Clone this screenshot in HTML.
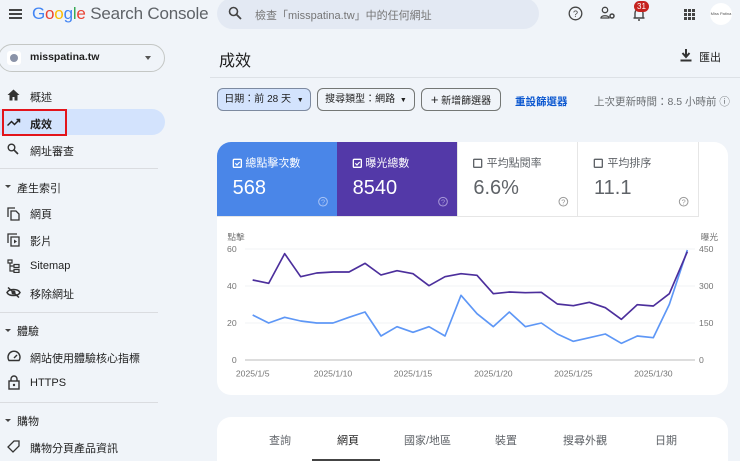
<!DOCTYPE html>
<html style="width:740px;height:461px;overflow:hidden"><head><meta charset="utf-8"><style>
*{margin:0;padding:0;box-sizing:border-box}
body{width:740px;height:461px;overflow:hidden;background:#f0f4f9;font-family:"Liberation Sans","Noto Sans CJK TC",sans-serif;color:#1f1f1f;position:relative}
.a{position:absolute;white-space:nowrap}
.nav{font-size:11px;color:#1f1f1f}
.sec{font-size:11px;color:#1f1f1f}
.hr{position:absolute;left:0;width:158px;height:1px;background:#dadce0}
.chip{position:absolute;top:88px;height:23px;border:1px solid #747775;border-radius:6px;font-size:10px;line-height:21px;padding:0 6px;color:#1f1f1f;white-space:nowrap;overflow:hidden;text-align:center}
</style></head><body>
<!-- top bar -->
<div class="a" style="left:9px;top:9px;width:13px;height:2px;background:#444;box-shadow:0 4px 0 #444,0 8px 0 #444"></div>
<div class="a" style="left:32px;top:4px;font-size:17px;letter-spacing:-0.2px"><span style="color:#4285f4">G</span><span style="color:#ea4335">o</span><span style="color:#fbbc05">o</span><span style="color:#4285f4">g</span><span style="color:#34a853">l</span><span style="color:#ea4335">e</span> <span style="color:#5f6368">Search Console</span></div>
<div class="a" style="left:217px;top:-2px;width:322px;height:31px;background:#e3e9f3;border-radius:16px"></div>
<svg class="a" style="left:228px;top:6px" width="14" height="14" viewBox="0 0 14 14"><circle cx="5.5" cy="5.5" r="4" fill="none" stroke="#444" stroke-width="1.6"/><path d="M8.5 8.5L13 13" stroke="#444" stroke-width="1.8"/></svg>
<div class="a" style="left:255px;top:7px;font-size:11px;color:#757575">檢查「misspatina.tw」中的任何網址</div>
<svg class="a" style="left:568px;top:6px" width="15" height="15" viewBox="0 0 15 15"><circle cx="7.5" cy="7.5" r="6.3" fill="none" stroke="#444" stroke-width="1.3"/><text x="7.5" y="11" font-size="9" text-anchor="middle" fill="#444" font-family="Liberation Sans">?</text></svg>
<svg class="a" style="left:600px;top:6px" width="16" height="14" viewBox="0 0 16 14"><circle cx="5" cy="4" r="2.7" fill="none" stroke="#444" stroke-width="1.3"/><path d="M1 12c0-3 8-3 8 0z" fill="none" stroke="#444" stroke-width="1.3"/><circle cx="12" cy="10" r="2" fill="none" stroke="#444" stroke-width="1.5"/></svg>
<svg class="a" style="left:632px;top:6px" width="14" height="16" viewBox="0 0 14 16"><path d="M3 12V7a4 4 0 018 0v5h1.5M1.5 12h11M6 14h2" fill="none" stroke="#444" stroke-width="1.4"/></svg>
<div class="a" style="left:634px;top:1px;width:15px;height:11px;border-radius:6px;background:#c5221f;color:#fff;font-size:8px;line-height:11px;text-align:center">31</div>
<div class="a" style="left:684px;top:9px;width:3px;height:3px;background:#444;box-shadow:4px 0 #444,8px 0 #444,0 4px #444,4px 4px #444,8px 4px #444,0 8px #444,4px 8px #444,8px 8px #444"></div>
<div class="a" style="left:710px;top:3px;width:22px;height:22px;border-radius:50%;background:#fff;font-size:4px;color:#555;text-align:center;line-height:22px">Miss Patina</div>
<!-- sidebar -->
<div class="a" style="left:-2px;top:44px;width:167px;height:28px;border:1px solid #c4c7c5;border-radius:14px;background:#f0f4f9"></div>
<div class="a" style="left:7px;top:51px;width:14px;height:14px;background:#fff;border-radius:3px"></div>
<div class="a" style="left:10px;top:54px;width:8px;height:8px;border-radius:50%;background:#8a93a8"></div>
<div class="a nav" style="left:30px;top:51px;font-weight:bold;font-size:10.5px">misspatina.tw</div>
<div class="a" style="left:145px;top:56px;border:3px solid transparent;border-top:4px solid #555"></div>
<svg class="a" style="left:7px;top:89px" width="13" height="12" viewBox="0 0 13 12"><path d="M6.5 0.5L0.5 6h2v5.5h3V8h2v3.5h3V6h2z" fill="#333"/></svg>
<div class="a nav" style="left:30px;top:89px">概述</div>
<div class="a" style="left:-20px;top:109px;width:185px;height:26px;background:#d3e3fd;border-radius:0 13px 13px 0"></div>
<svg class="a" style="left:7px;top:117px" width="14" height="10" viewBox="0 0 14 10"><path d="M0.5 8.5l4-4 3 3 5-5M9.5 2.5h3v3" fill="none" stroke="#222" stroke-width="1.5"/></svg>
<div class="a nav" style="left:30px;top:116px;font-weight:bold">成效</div>
<div class="a" style="left:2px;top:109px;width:65px;height:27px;border:2px solid #e3141b"></div>
<svg class="a" style="left:7px;top:143px" width="12" height="12" viewBox="0 0 12 12"><circle cx="4.5" cy="4.5" r="3.3" fill="none" stroke="#333" stroke-width="1.4"/><path d="M7 7l4 4" stroke="#333" stroke-width="1.6"/></svg>
<div class="a nav" style="left:30px;top:143px">網址審查</div>
<div class="hr" style="top:168px"></div>
<div class="a" style="left:5px;top:185px;border:3px solid transparent;border-top:3px solid #444"></div>
<div class="a sec" style="left:17px;top:180px">產生索引</div>
<svg class="a" style="left:7px;top:207px" width="13" height="14" viewBox="0 0 13 14"><path d="M1 10V1h7M4 4h5l3 3v6H4z" fill="none" stroke="#333" stroke-width="1.3"/></svg>
<div class="a nav" style="left:30px;top:206px">網頁</div>
<svg class="a" style="left:7px;top:233px" width="13" height="14" viewBox="0 0 13 14"><path d="M1 10V1h9M4 4h8v9H4z" fill="none" stroke="#333" stroke-width="1.3"/><path d="M7 6.5v4l3-2z" fill="#333"/></svg>
<div class="a nav" style="left:30px;top:233px">影片</div>
<svg class="a" style="left:7px;top:259px" width="13" height="14" viewBox="0 0 13 14"><path d="M1 1h4v3H1zM3 4v8h4M3 7h4M7 5.5h5v3H7zM7 10.5h5v3H7z" fill="none" stroke="#333" stroke-width="1.2"/></svg>
<div class="a nav" style="left:30px;top:260px">Sitemap</div>
<svg class="a" style="left:6px;top:287px" width="15" height="11" viewBox="0 0 15 11"><path d="M1 5.5C3 1.5 12 1.5 14 5.5 12 9.5 3 9.5 1 5.5z" fill="none" stroke="#333" stroke-width="1.5"/><circle cx="7.5" cy="5.5" r="2" fill="#333"/><path d="M2 0.5l11 10" stroke="#333" stroke-width="1.5"/></svg>
<div class="a nav" style="left:30px;top:286px">移除網址</div>
<div class="hr" style="top:312px"></div>
<div class="a" style="left:5px;top:329px;border:3px solid transparent;border-top:3px solid #444"></div>
<div class="a sec" style="left:17px;top:323px">體驗</div>
<svg class="a" style="left:7px;top:350px" width="14" height="12" viewBox="0 0 14 12"><path d="M2 10.5A6 6 0 1112 10.5z" fill="none" stroke="#333" stroke-width="1.4"/><path d="M7 8l3-3" stroke="#333" stroke-width="1.4"/></svg>
<div class="a nav" style="left:30px;top:350px">網站使用體驗核心指標</div>
<svg class="a" style="left:8px;top:375px" width="12" height="15" viewBox="0 0 12 15"><path d="M3 6V4a3 3 0 016 0v2" fill="none" stroke="#333" stroke-width="1.4"/><rect x="1" y="6" width="10" height="8" fill="none" stroke="#333" stroke-width="1.4"/><circle cx="6" cy="10" r="1.2" fill="#333"/></svg>
<div class="a nav" style="left:30px;top:377px">HTTPS</div>
<div class="hr" style="top:402px"></div>
<div class="a" style="left:5px;top:419px;border:3px solid transparent;border-top:3px solid #444"></div>
<div class="a sec" style="left:17px;top:413px">購物</div>
<svg class="a" style="left:7px;top:440px" width="13" height="13" viewBox="0 0 13 13"><path d="M7 1h5v5l-6 6-5-5z" fill="none" stroke="#333" stroke-width="1.3"/></svg>
<div class="a nav" style="left:30px;top:440px">購物分頁產品資訊</div>
<!-- main header -->
<div class="a" style="left:219px;top:47px;font-size:16px">成效</div>
<svg class="a" style="left:680px;top:49px" width="12" height="13" viewBox="0 0 12 13"><path d="M6 0v7M2.5 4l3.5 4 3.5-4" fill="none" stroke="#333" stroke-width="2"/><rect x="0.5" y="10.5" width="11" height="2" fill="#333"/></svg>
<div class="a" style="left:699px;top:49px;font-size:11px">匯出</div>
<div class="a" style="left:210px;top:77px;width:530px;height:1px;background:#dde1e6"></div>
<div class="chip" style="left:217px;width:94px;background:#d3e3fd;border-color:#7d8aa0">日期：前 28 天 <span style="font-size:7px;margin-left:3px">▼</span></div>
<div class="chip" style="left:317px;width:98px">搜尋類型：網路 <span style="font-size:7px;margin-left:2px">▼</span></div>
<div class="chip" style="left:421px;width:80px"><span style="font-size:13px">+</span> 新增篩選器</div>
<div class="a" style="left:515px;top:94px;font-size:10.5px;color:#0b57d0;font-weight:bold">重設篩選器</div>
<div class="a" style="left:594px;top:94px;font-size:10.5px;color:#6b6f73">上次更新時間：8.5 小時前 ⓘ</div>
<!-- chart card -->
<div class="a" style="left:217px;top:142px;width:511px;height:253px;background:#fff;border-radius:14px;overflow:hidden">
 <div class="a" style="left:0;top:0;width:120px;height:74px;background:#4a86e8"></div>
 <div class="a" style="left:120px;top:0;width:120px;height:74px;background:#5339a8"></div>
 <div class="a" style="left:240px;top:0;width:1px;height:74px;background:#e6e6e6"></div>
 <div class="a" style="left:360px;top:0;width:1px;height:74px;background:#e6e6e6"></div>
 <div class="a" style="left:481px;top:0;width:1px;height:74px;background:#e6e6e6"></div>
 <div class="a" style="left:0;top:74px;width:482px;height:1px;background:#e6e6e6"></div>
</div>
<svg class="a" style="left:210px;top:140px" width="520" height="250" viewBox="0 0 1560 750" font-family="Liberation Sans,Noto Sans CJK TC,sans-serif">
 <g font-size="33">
  <rect x="70" y="58" width="24" height="24" rx="3" fill="none" stroke="#fff" stroke-width="4"/><path d="M76 70l5 5 8-9" fill="none" stroke="#fff" stroke-width="3.5"/>
  <text x="106" y="80" fill="#fff">總點擊次數</text>
  <text x="68" y="162" fill="#fff" font-size="60">568</text>
  <rect x="430" y="58" width="24" height="24" rx="3" fill="none" stroke="#fff" stroke-width="4"/><path d="M436 70l5 5 8-9" fill="none" stroke="#fff" stroke-width="3.5"/>
  <text x="466" y="80" fill="#fff">曝光總數</text>
  <text x="428" y="162" fill="#fff" font-size="60">8540</text>
  <rect x="791" y="58" width="24" height="24" rx="2" fill="none" stroke="#5f6368" stroke-width="4"/>
  <text x="830" y="80" fill="#5f6368">平均點閱率</text>
  <text x="790" y="162" fill="#5f6368" font-size="60">6.6%</text>
  <rect x="1153" y="58" width="24" height="24" rx="2" fill="none" stroke="#5f6368" stroke-width="4"/>
  <text x="1192" y="80" fill="#5f6368">平均排序</text>
  <text x="1152" y="162" fill="#5f6368" font-size="60">11.1</text>
 </g>
 <g fill="none" stroke-width="3"><circle cx="339" cy="185" r="13" stroke="#a9c4f5"/><circle cx="699" cy="185" r="13" stroke="#a899d8"/><circle cx="1060" cy="185" r="13" stroke="#999"/><circle cx="1421" cy="185" r="13" stroke="#999"/></g>
 <g font-size="22" text-anchor="middle"><text x="339" y="193" fill="#a9c4f5">?</text><text x="699" y="193" fill="#a899d8">?</text><text x="1060" y="193" fill="#999">?</text><text x="1421" y="193" fill="#999">?</text></g>
 <g stroke="#eceff1" stroke-width="2"><path d="M105 327H1455M105 438H1455M105 549H1455"/></g>
 <path d="M105 660H1455" stroke="#bbb" stroke-width="3"/>
 <g font-size="26" fill="#757575">
  <text x="52" y="300">點擊</text><text x="1472" y="300">曝光</text>
  <text x="80" y="336" text-anchor="end">60</text><text x="80" y="447" text-anchor="end">40</text><text x="80" y="558" text-anchor="end">20</text><text x="80" y="669" text-anchor="end">0</text>
  <text x="1467" y="336">450</text><text x="1467" y="447">300</text><text x="1467" y="558">150</text><text x="1467" y="669">0</text>
  <g text-anchor="middle"><text x="128" y="710">2025/1/5</text><text x="369" y="710">2025/1/10</text><text x="609" y="710">2025/1/15</text><text x="850" y="710">2025/1/20</text><text x="1090" y="710">2025/1/25</text><text x="1330" y="710">2025/1/30</text></g>
 </g>
 <polyline fill="none" stroke="#5e97f6" stroke-width="5" stroke-linejoin="round" points="128,525 176,549 224,532 272,543 320,549 369,549 417,532 465,516 513,588 561,560 609,577 657,560 705,588 753,466 801,521 850,560 898,516 946,560 994,549 1042,582 1090,604 1138,593 1186,582 1234,610 1282,588 1330,593 1378,493 1432,330"/>
 <polyline fill="none" stroke="#4c2f9c" stroke-width="5" stroke-linejoin="round" points="128,420 176,430 224,341 272,410 320,399 369,396 417,396 465,370 513,405 561,392 609,401 657,437 705,410 753,401 801,406 850,461 898,456 946,458 994,457 1042,492 1090,497 1138,487 1186,503 1234,538 1282,494 1330,498 1378,461 1432,335"/>
</svg>
<!-- tabs card -->
<div class="a" style="left:217px;top:417px;width:511px;height:44px;background:#fff;border-radius:14px 14px 0 0"></div>
<div class="a" style="top:432px;font-size:11px;color:#5f6368;left:269px">查詢</div>
<div class="a" style="top:432px;font-size:11px;color:#1f1f1f;left:337px">網頁</div>
<div class="a" style="top:432px;font-size:11px;color:#5f6368;left:404px">國家/地區</div>
<div class="a" style="top:432px;font-size:11px;color:#5f6368;left:495px">裝置</div>
<div class="a" style="top:432px;font-size:11px;color:#5f6368;left:563px">搜尋外觀</div>
<div class="a" style="top:432px;font-size:11px;color:#5f6368;left:655px">日期</div>
<div class="a" style="left:312px;top:459px;width:68px;height:2px;background:#444"></div>
</body></html>
